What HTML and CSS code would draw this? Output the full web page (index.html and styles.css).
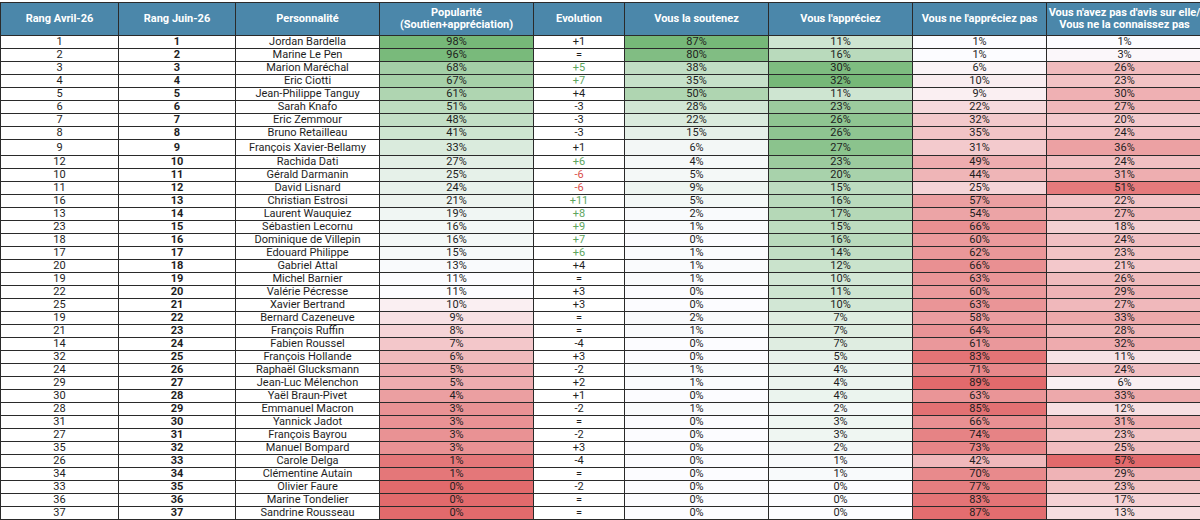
FILE: index.html
```html
<!DOCTYPE html>
<html lang="fr">
<head>
<meta charset="utf-8">
<title>Popularité des personnalités</title>
<link rel="stylesheet" href="styles.css">
</head>
<body>
<table class="grid">
<colgroup>
<col class="w-prev"><col class="w-rank"><col class="w-name"><col class="w-pop"><col class="w-evo"><col class="w-sout"><col class="w-appr"><col class="w-napp"><col class="w-nsp">
</colgroup>
<thead>
<tr>
<th>Rang Avril-26</th>
<th>Rang Juin-26</th>
<th>Personnalité</th>
<th>Popularité<br>(Soutien+appréciation)</th>
<th>Evolution</th>
<th>Vous la soutenez</th>
<th>Vous l'appréciez</th>
<th>Vous ne l'appréciez pas</th>
<th>Vous n'avez pas d'avis sur elle/<br>Vous ne la connaissez pas</th>
</tr>
</thead>
<tbody>
<tr><td>1</td><td class="rank">1</td><td>Jordan Bardella</td><td class="pop">98%</td><td>+1</td><td class="sout">87%</td><td class="appr">11%</td><td class="napp">1%</td><td class="nsp">1%</td></tr>
<tr><td>2</td><td class="rank">2</td><td>Marine Le Pen</td><td class="pop">96%</td><td>=</td><td class="sout">80%</td><td class="appr">16%</td><td class="napp">1%</td><td class="nsp">3%</td></tr>
<tr><td>3</td><td class="rank">3</td><td>Marion Maréchal</td><td class="pop">68%</td><td class="up">+5</td><td class="sout">38%</td><td class="appr">30%</td><td class="napp">6%</td><td class="nsp">26%</td></tr>
<tr><td>4</td><td class="rank">4</td><td>Eric Ciotti</td><td class="pop">67%</td><td class="up">+7</td><td class="sout">35%</td><td class="appr">32%</td><td class="napp">10%</td><td class="nsp">23%</td></tr>
<tr><td>5</td><td class="rank">5</td><td>Jean-Philippe Tanguy</td><td class="pop">61%</td><td>+4</td><td class="sout">50%</td><td class="appr">11%</td><td class="napp">9%</td><td class="nsp">30%</td></tr>
<tr><td>6</td><td class="rank">6</td><td>Sarah Knafo</td><td class="pop">51%</td><td>-3</td><td class="sout">28%</td><td class="appr">23%</td><td class="napp">22%</td><td class="nsp">27%</td></tr>
<tr><td>7</td><td class="rank">7</td><td>Eric Zemmour</td><td class="pop">48%</td><td>-3</td><td class="sout">22%</td><td class="appr">26%</td><td class="napp">32%</td><td class="nsp">20%</td></tr>
<tr><td>8</td><td class="rank">8</td><td>Bruno Retailleau</td><td class="pop">41%</td><td>-3</td><td class="sout">15%</td><td class="appr">26%</td><td class="napp">35%</td><td class="nsp">24%</td></tr>
<tr class="tall"><td>9</td><td class="rank">9</td><td>François Xavier-Bellamy</td><td class="pop">33%</td><td>+1</td><td class="sout">6%</td><td class="appr">27%</td><td class="napp">31%</td><td class="nsp">36%</td></tr>
<tr><td>12</td><td class="rank">10</td><td>Rachida Dati</td><td class="pop">27%</td><td class="up">+6</td><td class="sout">4%</td><td class="appr">23%</td><td class="napp">49%</td><td class="nsp">24%</td></tr>
<tr><td>10</td><td class="rank">11</td><td>Gérald Darmanin</td><td class="pop">25%</td><td class="down">-6</td><td class="sout">5%</td><td class="appr">20%</td><td class="napp">44%</td><td class="nsp">31%</td></tr>
<tr><td>11</td><td class="rank">12</td><td>David Lisnard</td><td class="pop">24%</td><td class="down">-6</td><td class="sout">9%</td><td class="appr">15%</td><td class="napp">25%</td><td class="nsp">51%</td></tr>
<tr><td>16</td><td class="rank">13</td><td>Christian Estrosi</td><td class="pop">21%</td><td class="up">+11</td><td class="sout">5%</td><td class="appr">16%</td><td class="napp">57%</td><td class="nsp">22%</td></tr>
<tr><td>13</td><td class="rank">14</td><td>Laurent Wauquiez</td><td class="pop">19%</td><td class="up">+8</td><td class="sout">2%</td><td class="appr">17%</td><td class="napp">54%</td><td class="nsp">27%</td></tr>
<tr><td>23</td><td class="rank">15</td><td>Sébastien Lecornu</td><td class="pop">16%</td><td class="up">+9</td><td class="sout">1%</td><td class="appr">15%</td><td class="napp">66%</td><td class="nsp">18%</td></tr>
<tr><td>18</td><td class="rank">16</td><td>Dominique de Villepin</td><td class="pop">16%</td><td class="up">+7</td><td class="sout">0%</td><td class="appr">16%</td><td class="napp">60%</td><td class="nsp">24%</td></tr>
<tr><td>17</td><td class="rank">17</td><td>Edouard Philippe</td><td class="pop">15%</td><td class="up">+6</td><td class="sout">1%</td><td class="appr">14%</td><td class="napp">62%</td><td class="nsp">23%</td></tr>
<tr><td>20</td><td class="rank">18</td><td>Gabriel Attal</td><td class="pop">13%</td><td>+4</td><td class="sout">1%</td><td class="appr">12%</td><td class="napp">66%</td><td class="nsp">21%</td></tr>
<tr><td>19</td><td class="rank">19</td><td>Michel Barnier</td><td class="pop">11%</td><td>=</td><td class="sout">1%</td><td class="appr">10%</td><td class="napp">63%</td><td class="nsp">26%</td></tr>
<tr><td>22</td><td class="rank">20</td><td>Valérie Pécresse</td><td class="pop">11%</td><td>+3</td><td class="sout">0%</td><td class="appr">11%</td><td class="napp">60%</td><td class="nsp">29%</td></tr>
<tr><td>25</td><td class="rank">21</td><td>Xavier Bertrand</td><td class="pop">10%</td><td>+3</td><td class="sout">0%</td><td class="appr">10%</td><td class="napp">63%</td><td class="nsp">27%</td></tr>
<tr><td>19</td><td class="rank">22</td><td>Bernard Cazeneuve</td><td class="pop">9%</td><td>=</td><td class="sout">2%</td><td class="appr">7%</td><td class="napp">58%</td><td class="nsp">33%</td></tr>
<tr><td>21</td><td class="rank">23</td><td>François Ruffin</td><td class="pop">8%</td><td>=</td><td class="sout">1%</td><td class="appr">7%</td><td class="napp">64%</td><td class="nsp">28%</td></tr>
<tr><td>14</td><td class="rank">24</td><td>Fabien Roussel</td><td class="pop">7%</td><td>-4</td><td class="sout">0%</td><td class="appr">7%</td><td class="napp">61%</td><td class="nsp">32%</td></tr>
<tr><td>32</td><td class="rank">25</td><td>François Hollande</td><td class="pop">6%</td><td>+3</td><td class="sout">0%</td><td class="appr">5%</td><td class="napp">83%</td><td class="nsp">11%</td></tr>
<tr><td>24</td><td class="rank">26</td><td>Raphaël Glucksmann</td><td class="pop">5%</td><td>-2</td><td class="sout">1%</td><td class="appr">4%</td><td class="napp">71%</td><td class="nsp">24%</td></tr>
<tr><td>29</td><td class="rank">27</td><td>Jean-Luc Mélenchon</td><td class="pop">5%</td><td>+2</td><td class="sout">1%</td><td class="appr">4%</td><td class="napp">89%</td><td class="nsp">6%</td></tr>
<tr><td>30</td><td class="rank">28</td><td>Yaël Braun-Pivet</td><td class="pop">4%</td><td>+1</td><td class="sout">0%</td><td class="appr">4%</td><td class="napp">63%</td><td class="nsp">33%</td></tr>
<tr><td>28</td><td class="rank">29</td><td>Emmanuel Macron</td><td class="pop">3%</td><td>-2</td><td class="sout">1%</td><td class="appr">2%</td><td class="napp">85%</td><td class="nsp">12%</td></tr>
<tr><td>31</td><td class="rank">30</td><td>Yannick Jadot</td><td class="pop">3%</td><td>=</td><td class="sout">0%</td><td class="appr">3%</td><td class="napp">66%</td><td class="nsp">31%</td></tr>
<tr><td>27</td><td class="rank">31</td><td>François Bayrou</td><td class="pop">3%</td><td>-2</td><td class="sout">0%</td><td class="appr">3%</td><td class="napp">74%</td><td class="nsp">23%</td></tr>
<tr><td>35</td><td class="rank">32</td><td>Manuel Bompard</td><td class="pop">3%</td><td>+3</td><td class="sout">0%</td><td class="appr">2%</td><td class="napp">73%</td><td class="nsp">25%</td></tr>
<tr><td>26</td><td class="rank">33</td><td>Carole Delga</td><td class="pop">1%</td><td>-4</td><td class="sout">0%</td><td class="appr">1%</td><td class="napp">42%</td><td class="nsp">57%</td></tr>
<tr><td>34</td><td class="rank">34</td><td>Clémentine Autain</td><td class="pop">1%</td><td>=</td><td class="sout">0%</td><td class="appr">1%</td><td class="napp">70%</td><td class="nsp">29%</td></tr>
<tr><td>33</td><td class="rank">35</td><td>Olivier Faure</td><td class="pop">0%</td><td>-2</td><td class="sout">0%</td><td class="appr">0%</td><td class="napp">77%</td><td class="nsp">23%</td></tr>
<tr><td>36</td><td class="rank">36</td><td>Marine Tondelier</td><td class="pop">0%</td><td>=</td><td class="sout">0%</td><td class="appr">0%</td><td class="napp">83%</td><td class="nsp">17%</td></tr>
<tr><td>37</td><td class="rank">37</td><td>Sandrine Rousseau</td><td class="pop">0%</td><td>=</td><td class="sout">0%</td><td class="appr">0%</td><td class="napp">87%</td><td class="nsp">13%</td></tr>
</tbody>
</table>
<script src="scales.js"></script>
</body>
</html>
```

FILE: styles.css
```css
html, body {
  margin: 0;
  padding: 0;
  overflow: hidden;
  background: #ffffff;
}
body {
  padding-top: 2px;
  font-family: Roboto, "Liberation Sans", sans-serif;
}
.grid {
  border-collapse: collapse;
  table-layout: fixed;
  width: 1202px;
  font-size: 11px;
  color: #1e1e1e;
}
.w-prev { width: 118px; }
.w-rank { width: 117px; }
.w-name { width: 144px; }
.w-pop { width: 154px; }
.w-evo { width: 91px; }
.w-sout { width: 144px; }
.w-appr { width: 144px; }
.w-napp { width: 134px; }
.w-nsp { width: 156px; }
.grid th,
.grid td {
  border: 1px solid #2a2a2a;
  padding: 0;
  text-align: center;
  white-space: nowrap;
  overflow: hidden;
}
.grid th {
  background: #4b87aa;
  color: #ffffff;
  font-weight: 700;
  height: 32px;
  line-height: 12px;
}
.grid td {
  height: 12px;
  line-height: 12px;
}
.grid tr.tall td {
  height: 15px;
}
.rank { font-weight: 700; }
.up { color: #5ea65e; }
.down { color: #d9504c; }
```

FILE: scales.js
```js
(function () {
  var WHITE = [252, 252, 255];
  var GREEN = [118, 184, 120];
  var RED = [226, 106, 108];
  function mix(a, b, t) {
    t = Math.max(0, Math.min(1, t));
    return 'rgb(' + a.map(function (v, i) { return Math.round(v + (b[i] - v) * t); }).join(',') + ')';
  }
  function apply(cls, kind) {
    var cells = Array.prototype.slice.call(document.querySelectorAll('td.' + cls));
    var vals = cells.map(function (c) { return parseFloat(c.textContent); });
    var min = Math.min.apply(null, vals), max = Math.max.apply(null, vals);
    var sorted = vals.slice().sort(function (a, b) { return a - b; });
    var mid = sorted[Math.floor(sorted.length / 2)];
    cells.forEach(function (c, i) {
      var v = vals[i], col;
      if (kind === 'tri') {
        col = v >= mid ? mix(WHITE, GREEN, (v - mid) / (max - mid)) : mix(WHITE, RED, (mid - v) / (mid - min));
      } else if (kind === 'green') {
        col = mix(WHITE, GREEN, (v - min) / (max - min));
      } else {
        col = mix(WHITE, RED, (v - min) / (max - min));
      }
      c.style.backgroundColor = col;
    });
  }
  apply('pop', 'tri');
  apply('sout', 'green');
  apply('appr', 'green');
  apply('napp', 'red');
  apply('nsp', 'red');
})();
```
